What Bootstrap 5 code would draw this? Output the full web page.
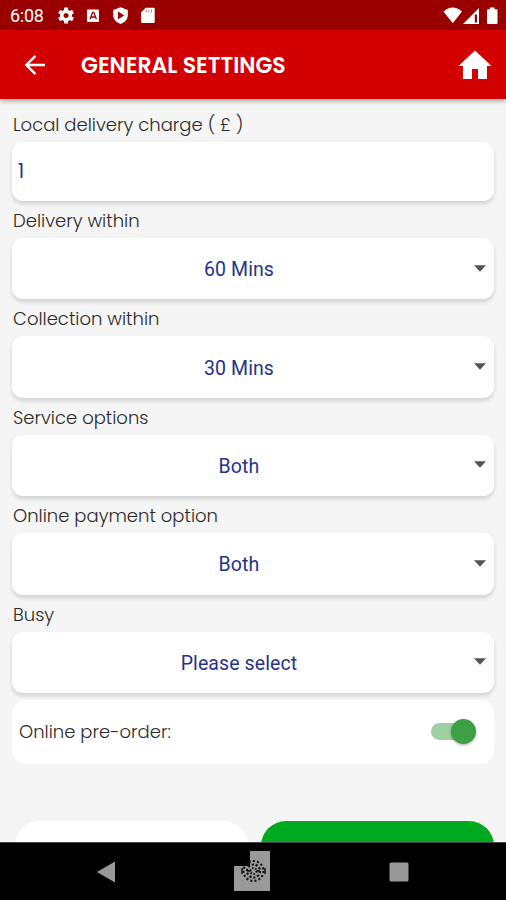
<!DOCTYPE html>
<html lang="en">
<head>
<meta charset="utf-8">
<meta name="viewport" content="width=device-width, initial-scale=1">
<title>General settings</title>
<link href="https://cdn.jsdelivr.net/npm/bootstrap@5.3.0/dist/css/bootstrap.min.css" rel="stylesheet">
<style>
body{background:#f5f5f5;font-family:Poppins,Inter,"Open Sans",sans-serif;color:#2a2a2a;height:900px}
svg{display:block;flex:none}
.status{background:#9b0000;height:30px;font:18px/32px Roboto,sans-serif;letter-spacing:-.3px;padding:2px 7px 0 10px}
.notices{margin-left:14px}
.appbar{background:#d20000;height:69px;box-shadow:0 2px 5px rgba(0,0,0,.35);z-index:1;padding:0 14px 0 24px}
.appbar h1{font-size:22px;font-weight:600;margin-left:35px;line-height:30px;padding-top:2px}
.settings{padding:6px 12px 0}
.cap{height:37px;line-height:40px;font-size:18px;font-weight:300;padding-left:1px;white-space:nowrap}
.box{background:#fff;border-radius:11px;box-shadow:0 3px 4px rgba(0,0,0,.14);height:61.4px;color:#26328c;font:19.5px Roboto,sans-serif;letter-spacing:.1px}
.box.entry{height:59px;font:19px Poppins,Inter,sans-serif;padding-left:6px}
.pick{padding:2px 8px 0 0}
.pick span{padding-right:8px}
.caret{margin-top:-3px}
.pre{height:64px;border-radius:14px;background:#fff;margin-top:7px;padding:0 18px 0 7px;font-size:18px;font-weight:300}
.track{width:42px;height:17px;border-radius:9px;background:#a0cfa2;margin-right:3px}
.thumb{width:25px;height:25px;border-radius:50%;background:#3ea044;box-shadow:0 1px 3px rgba(0,0,0,.35);margin-right:-3px}
.actions{height:21px;padding:0 12px 0 15px;gap:13px;margin-top:auto}
.actions div{height:50px;border-radius:25px}
.save{background:#00aa20}
.sysnav{height:58px;background:#000;border-top:1px solid #444;padding:0 97px}
</style>
<script src="https://cdn.jsdelivr.net/npm/bootstrap@5.3.0/dist/js/bootstrap.bundle.min.js"></script>
</head>
<body class="d-flex flex-column overflow-hidden">
<svg width="0" height="0" class="position-absolute"><defs><symbol id="caret" viewBox="0 0 12 7"><path d="M0 .3h12L6 6.800z" fill="#555"/></symbol></defs></svg>
<div class="status d-flex align-items-center text-white">
<span>6:08</span>
<!-- gear, keyboard, shield, memory card -->
<svg class="notices" width="98" height="18" viewBox="58 7 98 18" fill="#fff">
<g transform="translate(66.100 15.500)"><circle r="4.300" fill="none" stroke="#fff" stroke-width="3.400"/><g id="teeth"><rect x="-2" y="-8" width="4" height="3.500" rx=".6"/><rect x="-2" y="4.500" width="4" height="3.500" rx=".6"/></g><use href="#teeth" transform="rotate(60)"/><use href="#teeth" transform="rotate(120)"/></g>
<rect x="87" y="9.500" width="12" height="12.500" rx="1"/><path d="M90 19.300l2.600-7h1.200l2.600 7M91.300 17h3.800" fill="none" stroke="#9b0000" stroke-width="1.300"/>
<path d="M120.500 7.200l7.300 2.900v5.200c0 4-3 7.300-7.300 8.700-4.300-1.400-7.300-4.700-7.300-8.700v-5.200z"/><path d="M118 11.500l6.300 3.900-6.300 3.900z" fill="#9b0000"/>
<path d="M145.800 7.800h7.600a1.300 1.300 0 0 1 1.300 1.300v12.700a1.300 1.300 0 0 1-1.300 1.300h-11a1.300 1.300 0 0 1-1.300-1.300v-9.500z"/><path d="M146.300 9.500v3M148.900 9.500v3M151.500 9.500v3" stroke="#9b0000" stroke-width=".5"/>
</svg>
<svg class="ms-auto" width="56" height="18" viewBox="443 6 56 18" fill="#fff">
<path d="M443.500 10.500q9.250-8 18.500 0l-9.250 11.800z"/>
<path d="M479 7v16h-16z"/><path d="M474.800 13.500v8h2.200v-8z" fill="#9b0000"/>
<path d="M490 6.500h4.500v1.700h2a1 1 0 0 1 1 1V22a1 1 0 0 1-1 1h-8.500a1 1 0 0 1-1-1V9.200a1 1 0 0 1 1-1h2z"/>
</svg>
</div>
<header class="appbar d-flex align-items-center text-white position-relative">
<svg width="22" height="22" viewBox="0 0 22 22" fill="none" stroke="#fff" stroke-width="2.400"><path d="M21 11H3M11.500 1.800L2.300 11l9.200 9.200"/></svg>
<h1 class="mb-0">GENERAL SETTINGS</h1>
<svg class="ms-auto" width="34" height="30" viewBox="0 0 34 30" fill="#fff"><path d="M17 .5L33.500 16H29v13h-9V19h-6v10H5V16H.5z"/></svg>
</header>
<main class="settings">
<div class="cap">Local delivery charge ( £ )</div>
<div class="box entry d-flex align-items-center">1</div>
<div class="cap">Delivery within</div>
<div class="box pick d-flex align-items-center"><span class="flex-fill text-center">60 Mins</span><svg class="caret" width="12" height="7"><use href="#caret"/></svg></div>
<div class="cap">Collection within</div>
<div class="box pick d-flex align-items-center"><span class="flex-fill text-center">30 Mins</span><svg class="caret" width="12" height="7"><use href="#caret"/></svg></div>
<div class="cap">Service options</div>
<div class="box pick d-flex align-items-center"><span class="flex-fill text-center">Both</span><svg class="caret" width="12" height="7"><use href="#caret"/></svg></div>
<div class="cap">Online payment option</div>
<div class="box pick d-flex align-items-center"><span class="flex-fill text-center">Both</span><svg class="caret" width="12" height="7"><use href="#caret"/></svg></div>
<div class="cap">Busy</div>
<div class="box pick d-flex align-items-center"><span class="flex-fill text-center">Please select</span><svg class="caret" width="12" height="7"><use href="#caret"/></svg></div>
<div class="pre d-flex align-items-center justify-content-between"><span>Online pre-order:</span><div class="track d-flex align-items-center justify-content-end"><div class="thumb"></div></div></div>
</main>
<div class="actions d-flex overflow-hidden"><div class="bg-white flex-fill"></div><div class="save flex-fill"></div></div>
<nav class="sysnav d-flex align-items-center justify-content-between">
<svg width="18" height="22" viewBox="0 0 18 22"><path d="M18 .5v21L0 11z" fill="#999"/></svg>
<svg width="37" height="41" viewBox="0 0 37 41"><path d="M16 0h20v40H0V15h16z" fill="#999"/>
<g fill="none" stroke="#111"><circle cx="19.500" cy="20" r="10" stroke-width="2.200" stroke-dasharray="2 2.200"/><circle cx="19.500" cy="20" r="6.500" stroke-width="2.200" stroke-dasharray="2.200 1.800"/><circle cx="19.500" cy="20" r="3" stroke-width="2" stroke-dasharray="1.500 1.600"/><path d="M8 17v6M31 17v6M13 20h4M22 20h4" stroke-width="1.500"/></g></svg>
<svg width="20" height="20" viewBox="0 0 20 20"><rect x=".5" y=".5" width="19" height="19" rx="1.500" fill="#999"/></svg>
</nav>
</body>
</html>
